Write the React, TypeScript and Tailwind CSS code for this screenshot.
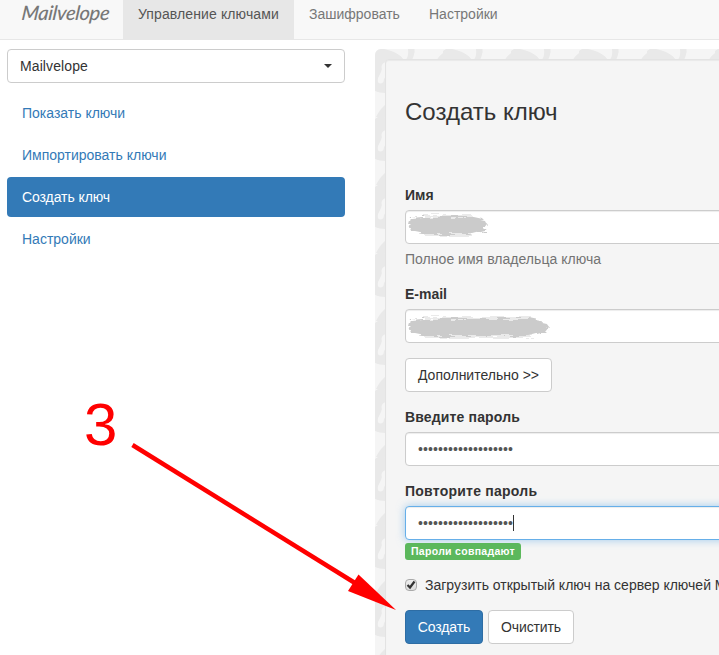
import React, { useState } from 'react';

const tabs = ['Управление ключами', 'Зашифровать', 'Настройки'];
const menu = ['Показать ключи', 'Импортировать ключи', 'Создать ключ', 'Настройки'];

const inputClass =
  'flex h-[34px] w-[400px] rounded border border-[#ccc] bg-white px-3 text-[#555] shadow-[inset_0_1px_1px_rgba(0,0,0,0.075)]';
const buttonClass = 'h-[34px] rounded border leading-5';

const LockPattern = () => (
  <svg className="absolute inset-0 h-full w-full" aria-hidden="true">
    <defs>
      <pattern id="locks" width="68" height="68" patternUnits="userSpaceOnUse">
        <g fill="#e9e9e9">
          <path d="M0 2L3 0H9C18 2 25 5 29 11V44H10Q4 44 0 42Z" />
          <path d="M10 56Q4 61 0 70H14V56Z" />
          <path d="M68 4Q64 7 61.500 11H68Z" />
          <path d="M33 0H39.500Q40 5 37 11H31Q34 6 33 0Z" />
        </g>
        <path d="M11 13Q6.500 14 6.500 18Q7.500 20 6 23L3 29Q1.500 34.500 6 34.500Q9 34 9 30L11 27Z" fill="#f5f5f5" />
      </pattern>
    </defs>
    <rect width="100%" height="100%" fill="url(#locks)" />
  </svg>
);

const Smudge = ({ width, id }) => (
  <svg width={width} height="26" className="-ml-3 shrink-0 overflow-visible" aria-hidden="true">
    <filter id={id} x="-5%" y="-20%" width="110%" height="140%">
      <feTurbulence type="fractalNoise" baseFrequency="0.06 0.35" numOctaves="3" seed="4" />
      <feDisplacementMap in="SourceGraphic" scale="8" />
      <feGaussianBlur stdDeviation="0.7" />
    </filter>
    <g filter={`url(#${id})`} fill="#cbcbcb">
      <path d={`M5 6L16 5H${width - 18}L${width - 4} 8L${width} 13L${width - 4} 18L${width - 20} 22H20L5 19L3 13Z`} />
      <path d={`M18 3H${width - 16}V24H18Z`} opacity="0.4" />
    </g>
  </svg>
);

const Arrow = () => (
  <svg className="pointer-events-none absolute left-0 top-0" width="719" height="655" aria-hidden="true">
    <path d="M132.500 445L355 583" stroke="#f00" strokeWidth="4.500" />
    <path d="M358.500 574.500L348 591L396 610Z" fill="#f00" />
  </svg>
);

const App = () => {
  const [checked, setChecked] = useState(true);
  const dots = '•'.repeat(19);

  return (
    <div className="relative h-[655px] w-[719px] overflow-hidden bg-white font-['Liberation_Sans',sans-serif] text-sm leading-5 text-[#333]">
      <nav className="flex h-10 border-b border-[#e7e7e7] bg-[#f8f8f8] text-[#777]">
        <div className="w-[123px] -skew-x-6 pl-[21px] font-['Lato',cursive] text-[20px] leading-[25px] font-medium italic tracking-[-0.3px]">
          Mailvelope
        </div>
        {tabs.map((tab, i) => (
          <a
            key={tab}
            className={
              i === 0
                ? 'w-[171px] bg-[#e7e7e7] px-[15px] pt-1 tracking-[0.11px] whitespace-nowrap text-[#555]'
                : 'w-[120px] px-[15px] pt-1'
            }
          >
            {tab}
          </a>
        ))}
      </nav>

      <div className="flex gap-[30px] pl-[7px] pt-[9px]">
        <aside className="w-[338px] shrink-0">
          <button className="flex h-[34px] w-full items-center justify-between rounded border border-[#ccc] bg-white px-3 tracking-[0.1px]">
            Mailvelope
            <span className="border-x-4 border-t-4 border-x-transparent border-t-[#333]" />
          </button>
          <ul className="mt-2.5 flex flex-col gap-0.5">
            {menu.map((item) => (
              <li
                key={item}
                className={
                  item === 'Создать ключ'
                    ? 'rounded bg-[#337ab7] px-[15px] py-2.5 tracking-[-0.08px] text-white'
                    : 'rounded px-[15px] py-2.5 text-[#337ab7]'
                }
              >
                {item}
              </li>
            ))}
          </ul>
        </aside>

        <main className="relative h-[640px] w-[460px] shrink-0 overflow-hidden rounded-md bg-[#f5f5f5] pl-2.5 pt-2.5">
          <LockPattern />
          <form
            className="relative h-[650px] w-[460px] rounded border border-[#e3e3e3] bg-[#f5f5f5] pl-[19px] pt-[37px] shadow-[inset_0_1px_1px_rgba(0,0,0,0.05)]"
            onSubmit={(e) => e.preventDefault()}
          >
            <h3 className="text-2xl leading-[30px]">Создать ключ</h3>

            <div className="mt-[58px]">
              <label className="mb-[5px] block font-bold">Имя</label>
              <div className={`${inputClass} items-start pt-px`}>
                <Smudge width={82} id="name-smudge" />
              </div>
              <p className="mt-[5px] tracking-[0.03px] text-[#737373]">Полное имя владельца ключа</p>
            </div>

            <div className="mt-[15px]">
              <label className="mb-[5px] block font-bold">E-mail</label>
              <div className={`${inputClass} items-start pt-1`}>
                <Smudge width={143} id="email-smudge" />
              </div>
            </div>

            <button className={`${buttonClass} mt-[15px] block w-[147px] border-[#ccc] bg-white`}>
              Дополнительно &gt;&gt;
            </button>

            <div className="mt-[15px]">
              <label className="mb-[5px] block font-bold tracking-[0.15px]">Введите пароль</label>
              <div className={`${inputClass} items-center tracking-[0.1px]`}>{dots}</div>
            </div>

            <div className="mt-[15px]">
              <label className="mb-[5px] block font-bold tracking-[0.24px]">Повторите пароль</label>
              <div className="flex h-[34px] w-[400px] items-center rounded border border-[#66afe9] bg-white px-3 tracking-[0.1px] text-[#555] shadow-[inset_0_1px_1px_rgba(0,0,0,0.075),0_0_8px_rgba(102,175,233,0.6)]">
                {dots}
                <span className="h-4 w-px bg-[#333]" />
              </div>
              <div className="mt-[3px] flex">
                <span className="h-[17px] w-[116px] rounded-[3px] bg-[#5cb85c] pl-1.5 text-[10.5px] leading-[17px] font-bold tracking-[0.3px] whitespace-nowrap text-white">
                  Пароли совпадают
                </span>
              </div>
            </div>

            <label className="mt-[15px] flex items-center whitespace-nowrap">
              <input type="checkbox" className="sr-only" checked={checked} onChange={() => setChecked(!checked)} />
              <span className="mr-2 flex h-3 w-3 items-center justify-center rounded-sm border border-[#aaa] bg-linear-to-b from-[#eee] to-[#ddd]">
                {checked && (
                  <svg width="10" height="10" viewBox="0 0 10 10" aria-hidden="true">
                    <path d="M1.500 5L4 7.500L8.500 1.500" stroke="#333" strokeWidth="2.200" fill="none" />
                  </svg>
                )}
              </span>
              Загрузить открытый ключ на сервер ключей Mailvelope
            </label>

            <div className="mt-[15px] flex gap-[5px]">
              <button className={`${buttonClass} w-[78px] border-[#2e6da4] bg-[#337ab7] tracking-[-0.1px] text-white`}>
                Создать
              </button>
              <button className={`${buttonClass} w-[86px] border-[#ccc] bg-white tracking-[-0.1px]`}>Очистить</button>
            </div>
          </form>
        </main>
      </div>

      <span className="absolute left-[84px] top-[391px] text-[60px] leading-[68px] text-[#f00]">3</span>
      <Arrow />
    </div>
  );
};

export default App;
